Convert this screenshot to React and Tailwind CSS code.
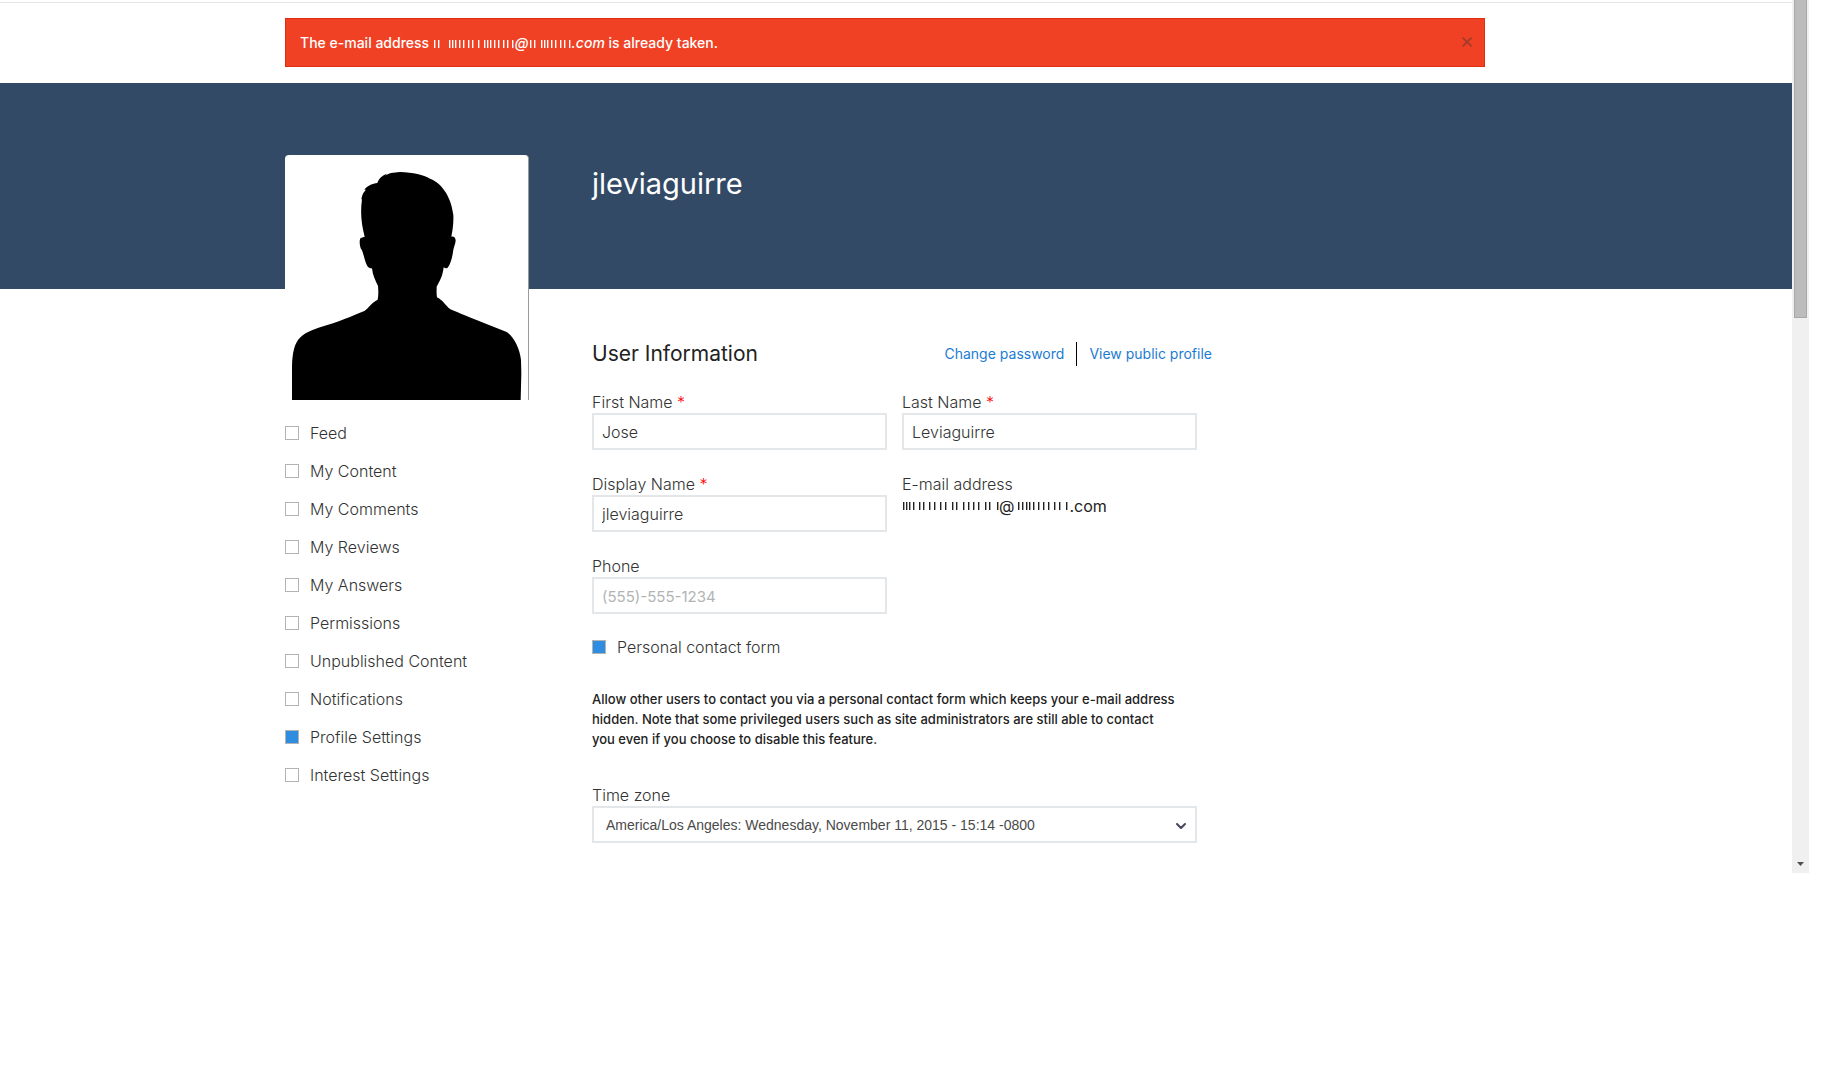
import React, { useState } from 'react';
import { ChevronDown } from 'lucide-react';

const menuItems = [
    'Feed',
    'My Content',
    'My Comments',
    'My Reviews',
    'My Answers',
    'Permissions',
    'Unpublished Content',
    'Notifications',
    'Profile Settings',
    'Interest Settings',
];

const checkboxClass = "appearance-none size-3.5 shrink-0 border border-[#b3b3b3] bg-white checked:bg-[#2e8de0]";
const inputClass = "block w-full h-[37px] border-2 border-[#e3e7ea] bg-white px-2 text-base font-light text-[#333] placeholder:text-[15px] placeholder:font-normal placeholder:text-[#b0b4b6] outline-none";

// Strokes left over from a masked part of an address
const Mask = ({ marks, width, className }) => (
    <svg className={className} width={width} height="8" viewBox={`0 0 ${width} 8`} fill="currentColor" aria-hidden="true">
        {marks.map(x => <rect key={x} x={x} y="0" width="1.4" height="8" />)}
    </svg>
);

const Field = ({ id, label, required, ...rest }) => (
    <div>
        <label htmlFor={id} className="block leading-[22px]">
            {label} {required && <span className="text-[#f00]">*</span>}
        </label>
        <input id={id} type="text" className={inputClass} {...rest} />
    </div>
);

const Avatar = () => (
    <div className="h-[245px] w-[244px] rounded-t border-r border-[#9a9a9a] bg-white">
        <svg className="block h-full w-full" viewBox="45 45 729 735" role="img" aria-label="Profile picture">
            <path d="M66 780V690C66 650 70 620 84 600C100 578 130 568 155 560C200 548 250 527 283 513C298 502 300 492 323 479C326 465 325 450 324 438C315 420 308 405 306 385C298 386 293 382 289 372C282 355 280 335 272 325C268 312 268 300 272 294L284 290C275 255 270 220 276 178L274 178C276 165 280 156 288 149L283 149C292 138 308 130 322 129C326 115 338 106 350 101L346 107C354 100 370 97 390 96C430 97 460 105 480 116C522 132 545 180 550 225C551 250 548 270 544 290C552 289 557 293 557 303C555 315 550 325 549 335C546 360 538 378 532 384C528 386 524 384 521 382C518 410 508 425 500 440C500 450 499 462 501 472C520 482 525 495 541 508C570 520 600 533 640 548L710 576C730 588 750 625 753 660L754 700L752 780Z" />
        </svg>
    </div>
);

const App = () => {
    const [showAlert, setShowAlert] = useState(true);
    const [active, setActive] = useState('Profile Settings');
    const [contactForm, setContactForm] = useState(true);

    return (
        <div className="flex bg-white pr-[23px] font-['Inter',sans-serif] text-base font-light text-[#333]">
            <div className="min-w-0 flex-1 pt-0.5 pb-[30px]">
                <div className="border-t border-[#e5e5e5] pt-[15px] pr-[22px] pb-4">
                    {showAlert && (
                        <div role="alert" className="mx-auto flex h-[49px] max-w-[1200px] items-center justify-between border border-[#de2d0f] bg-[#f04124] pr-2.5 pl-3.5 text-sm font-medium text-white">
                            <p className="flex items-center whitespace-pre">
                                <span>The e-mail address </span>
                                <Mask className="mt-0.5" width={82} marks={[1, 5, 16, 19, 22, 26, 30, 35, 39, 45, 51, 54, 57, 61, 65, 70, 74, 79]} />
                                <em>@</em>
                                <Mask className="mt-0.5" width={43} marks={[1, 5, 12, 15, 18, 22, 26, 31, 35, 40]} />
                                <em>.com</em>
                                <span> is already taken.</span>
                            </p>
                            <button type="button" aria-label="Close" onClick={() => setShowAlert(false)} className="pb-1.5 text-[22px] leading-none font-normal text-[#333] opacity-40">×</button>
                        </div>
                    )}
                </div>

                <div className="h-[206px] bg-[#334a66]"></div>

                <div className="-mt-[134px] pr-[22px]">
                    <div className="relative mx-auto flex max-w-[1200px] gap-[63px]">
                        <aside className="w-[244px] shrink-0">
                            <Avatar />
                            <ul className="mt-3.5">
                                {menuItems.map(item => (
                                    <li key={item}>
                                        <label className="flex h-[38px] items-center gap-[11px]">
                                            <input type="checkbox" className={checkboxClass} checked={active === item} onChange={() => setActive(item)} />
                                            {item}
                                        </label>
                                    </li>
                                ))}
                            </ul>
                        </aside>

                        <main className="w-[620px]">
                            <h1 className="h-[187px] pt-3 text-[29px] leading-[34px] font-normal text-white">jleviaguirre</h1>

                            <div className="mb-[25px] flex h-6 items-center justify-between">
                                <h2 className="text-[21px] font-normal text-[#222]">User Information</h2>
                                <div className="flex h-full items-center text-sm font-normal text-[#1b7cd2]">
                                    <a href="#password">Change password</a>
                                    <span className="mx-3 h-full border-l border-black"></span>
                                    <a href="#profile">View public profile</a>
                                </div>
                            </div>

                            <form className="pr-[15px]">
                                <div className="grid grid-cols-2 gap-x-[15px] gap-y-[23px]">
                                    <Field id="first" label="First Name" required defaultValue="Jose" />
                                    <Field id="last" label="Last Name" required defaultValue="Leviaguirre" />
                                    <Field id="display" label="Display Name" required defaultValue="jleviaguirre" />
                                    <div>
                                        <p className="leading-[22px]">E-mail address</p>
                                        <p className="flex items-center leading-[22px] font-normal text-[#222]">
                                            <Mask width={97} marks={[1, 4, 7, 11, 17, 21, 27, 32, 38, 43, 50, 54, 61, 66, 71, 76, 83, 87, 95]} />
                                            <span>@</span>
                                            <Mask width={55} marks={[4, 8, 12, 15, 19, 24, 29, 34, 40, 45, 52]} />
                                            <span>.com</span>
                                        </p>
                                    </div>
                                    <Field id="phone" label="Phone" placeholder="(555)-555-1234" />
                                </div>

                                <label className="mt-[23px] flex h-5 items-center gap-[11px]">
                                    <input type="checkbox" className={checkboxClass} checked={contactForm} onChange={() => setContactForm(!contactForm)} />
                                    Personal contact form
                                </label>
                                <p className="mt-8 pr-5 text-[13px] leading-5 font-medium text-[#222]">
                                    Allow other users to contact you via a personal contact form which keeps your e-mail address hidden. Note that some privileged users such as site administrators are still able to contact you even if you choose to disable this feature.
                                </p>

                                <label htmlFor="timezone" className="mt-[35px] block leading-[22px]">Time zone</label>
                                <div className="relative">
                                    <select id="timezone" className="block h-[37px] w-full appearance-none border-2 border-[#e3e7ea] bg-white px-3 font-['Liberation_Sans',Arial,sans-serif] text-sm text-[#4a4a4a] outline-none">
                                        <option>America/Los Angeles: Wednesday, November 11, 2015 - 15:14 -0800</option>
                                    </select>
                                    <ChevronDown className="pointer-events-none absolute top-3 right-2 text-[#44445e]" size={16} strokeWidth={3} />
                                </div>
                            </form>
                        </main>
                    </div>
                </div>
            </div>

            <div className="flex w-[17px] shrink-0 flex-col items-center justify-between bg-[#f0f0f0]">
                <div className="h-[318px] w-[13px] border border-t-0 border-[#a8a8a8] bg-[#bcbcbc]"></div>
                <svg className="mb-[7px]" width="7" height="4" viewBox="0 0 7 4" fill="#505050">
                    <path d="M0 0H7L3.5 4Z" />
                </svg>
            </div>
        </div>
    );
};

export default App;
